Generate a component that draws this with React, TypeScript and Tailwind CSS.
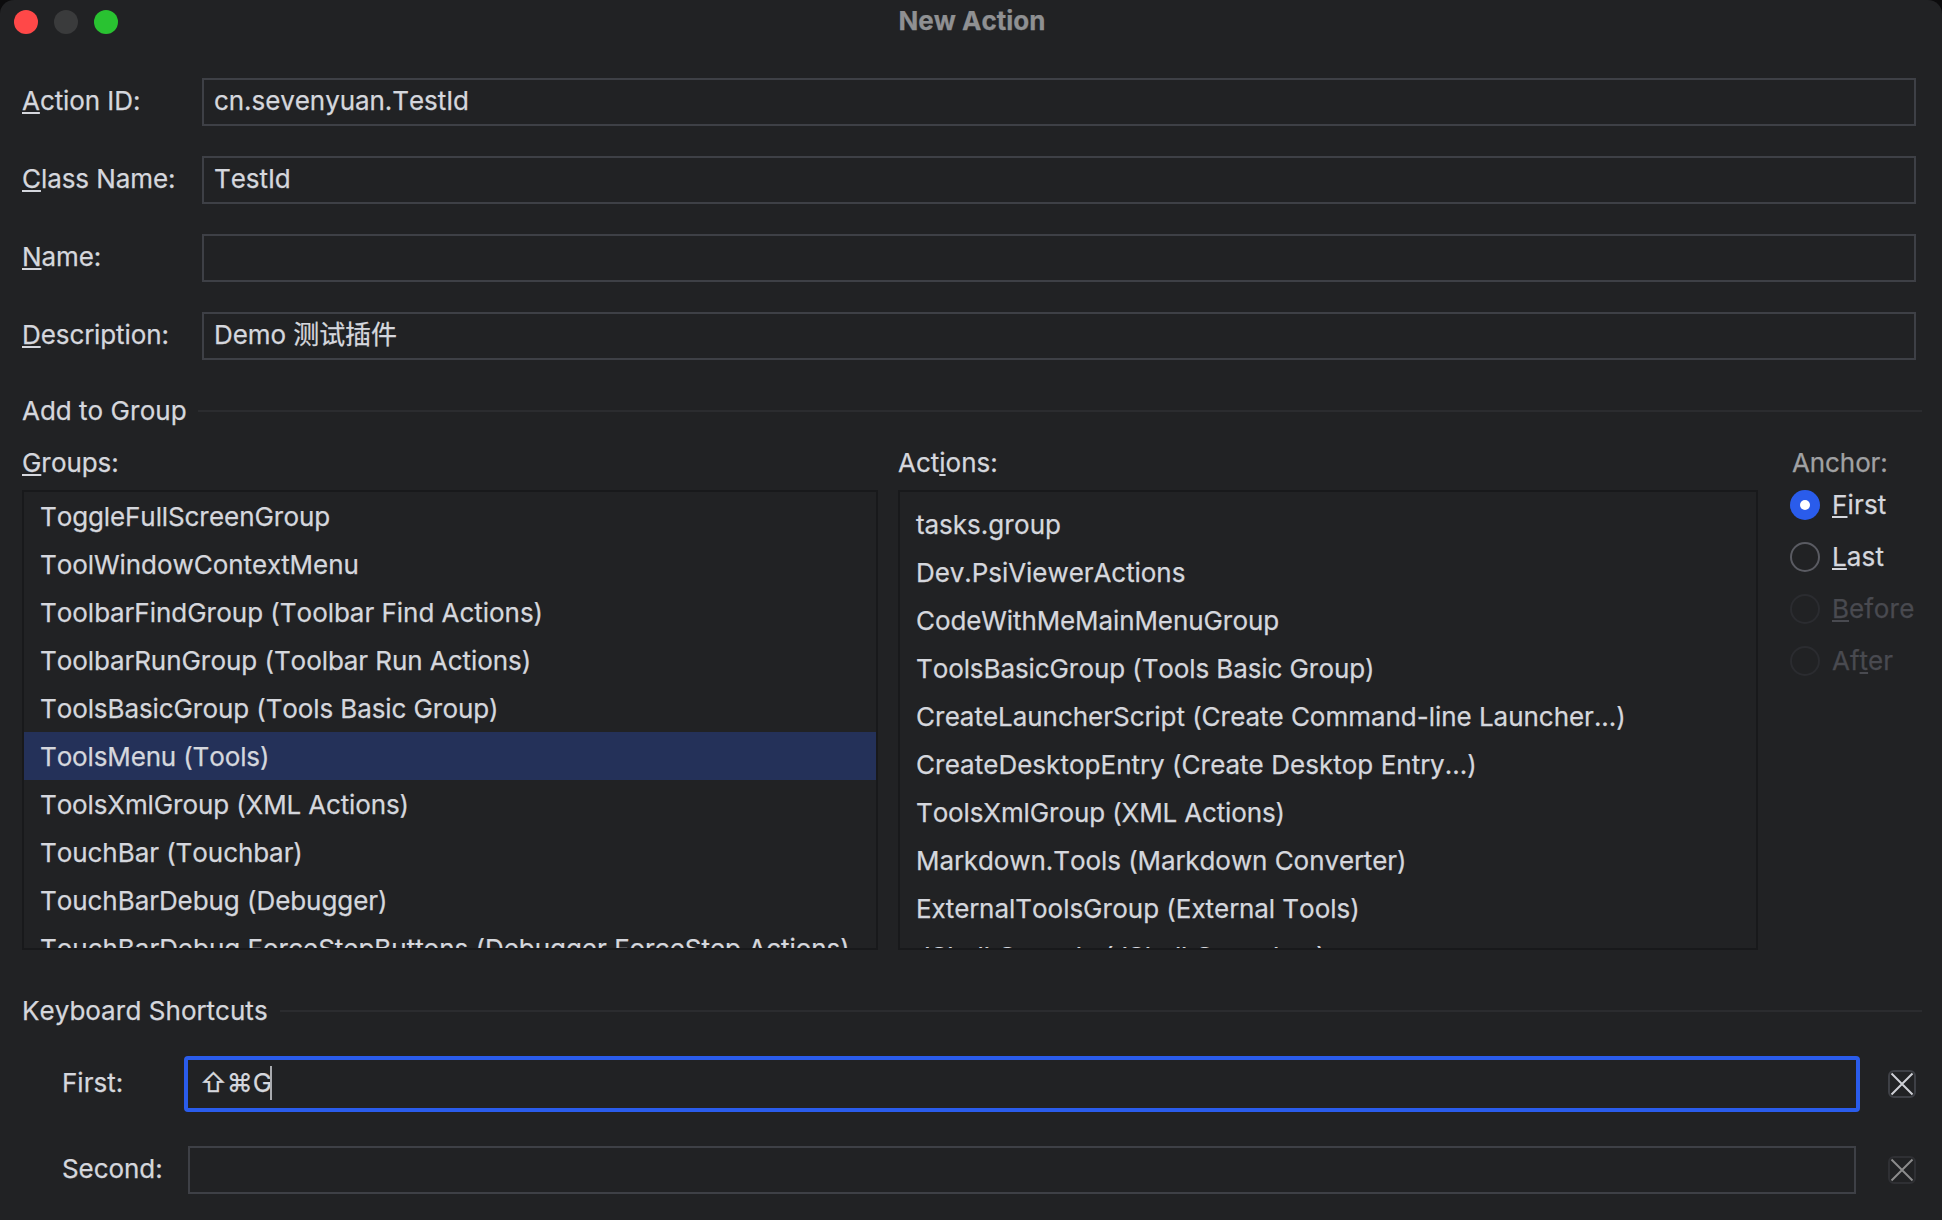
import React from "react";

type Mnemonic = { text: string; at?: number };

function Label({ text, at }: Mnemonic) {
  if (at === undefined) return <>{text}</>;
  return (
    <>
      {text.slice(0, at)}
      <span className="underline decoration-2 underline-offset-[2px] [text-decoration-skip-ink:none]">
        {text[at]}
      </span>
      {text.slice(at + 1)}
    </>
  );
}

const fields = [
  { label: "Action ID:", value: "cn.sevenyuan.TestId" },
  { label: "Class Name:", value: "TestId" },
  { label: "Name:", value: "" },
  { label: "Description:", value: "Demo 测试插件" },
];

type Item = { text: string; tracking: string };

const groups: Item[] = [
  { text: "ToggleFullScreenGroup", tracking: "tracking-[-0.1px]" },
  { text: "ToolWindowContextMenu", tracking: "tracking-[-0.06px]" },
  { text: "ToolbarFindGroup (Toolbar Find Actions)", tracking: "tracking-[-0.03px]" },
  { text: "ToolbarRunGroup (Toolbar Run Actions)", tracking: "tracking-[-0.06px]" },
  { text: "ToolsBasicGroup (Tools Basic Group)", tracking: "tracking-[-0.1px]" },
  { text: "ToolsMenu (Tools)", tracking: "tracking-[-0.14px]" },
  { text: "ToolsXmlGroup (XML Actions)", tracking: "tracking-[-0.14px]" },
  { text: "TouchBar (Touchbar)", tracking: "tracking-[-0.06px]" },
  { text: "TouchBarDebug (Debugger)", tracking: "tracking-[-0.06px]" },
  { text: "TouchBarDebug.ForceStepButtons (Debugger.ForceStep Actions)", tracking: "tracking-[-0.03px]" },
];

const actions: Item[] = [
  { text: "tasks.group", tracking: "tracking-normal" },
  { text: "Dev.PsiViewerActions", tracking: "tracking-[-0.06px]" },
  { text: "CodeWithMeMainMenuGroup", tracking: "tracking-[-0.1px]" },
  { text: "ToolsBasicGroup (Tools Basic Group)", tracking: "tracking-[-0.1px]" },
  { text: "CreateLauncherScript (Create Command-line Launcher...)", tracking: "tracking-[-0.03px]" },
  { text: "CreateDesktopEntry (Create Desktop Entry...)", tracking: "tracking-[0.03px]" },
  { text: "ToolsXmlGroup (XML Actions)", tracking: "tracking-[-0.14px]" },
  { text: "Markdown.Tools (Markdown Converter)", tracking: "tracking-[-0.06px]" },
  { text: "ExternalToolsGroup (External Tools)", tracking: "tracking-[-0.03px]" },
  { text: "JShell.Console (JShell Console...)", tracking: "tracking-[-0.14px]" },
];

const anchors = [
  { text: "First", at: 0, state: "selected" },
  { text: "Last", at: 0, state: "normal" },
  { text: "Before", at: 0, state: "disabled" },
  { text: "After", at: 2, state: "disabled" },
];

const radioStyle: Record<string, string> = {
  selected: "bg-[#2a5ceb]",
  normal: "border-2 border-[#5a5b62]",
  disabled: "border-2 border-[#2b2c30]",
};

function SectionTitle({ children, className }: { children: React.ReactNode; className: string }) {
  return (
    <div className="flex h-8 items-center">
      <span className={className}>{children}</span>
      <span className="h-0.5 flex-1 bg-[#2b2c2f]" />
    </div>
  );
}

function List({ items, selected, className }: { items: Item[]; selected?: number; className: string }) {
  return (
    <ul className={`h-[460px] overflow-hidden border-2 border-[#18191b] ${className}`}>
      {items.map((item, i) => (
        <li
          key={item.text}
          className={`h-12 whitespace-nowrap pl-4 leading-[49px] ${item.tracking} ${i === selected ? "bg-[#243159]" : ""}`}
        >
          {item.text}
        </li>
      ))}
    </ul>
  );
}

function ClearButton({ dim }: { dim?: boolean }) {
  return (
    <button
      className={`flex size-7 items-center justify-center rounded-md border-2 ${dim ? "border-[#2f3034]" : "border-[#3e4046]"}`}
    >
      <svg viewBox="0 0 24 24" className="size-6 shrink-0" fill="none" stroke={dim ? "#8c8c8c" : "#ced0d6"} strokeWidth="2">
        <path d="M1.5 1.5L22.5 22.5M22.5 1.5L1.5 22.5" />
      </svg>
    </button>
  );
}

export default function App() {
  return (
    <div className="h-[1220px] w-[1942px] overflow-hidden bg-[#0c0c0d]">
      <div className="flex h-full flex-col rounded-t-[14px] bg-[#212224] font-['Inter','Noto_Sans_CJK_SC',sans-serif] text-[26px] leading-8 text-[#d5d7dd] [-webkit-text-stroke:0.25px_currentColor] [font-kerning:none]">
        <header className="grid h-11 shrink-0 grid-cols-[1fr_auto_1fr] items-center pl-3.5">
          <div className="flex gap-4">
            <span className="size-6 rounded-full bg-[#ff4848]" />
            <span className="size-6 rounded-full bg-[#3a3b3c]" />
            <span className="size-6 rounded-full bg-[#29c231]" />
          </div>
          <h1 className="-ml-3 -mt-0.5 font-bold text-[#8f9092]">New Action</h1>
        </header>

        <form className="mt-[34px] flex flex-col gap-[30px] pl-[22px] pr-[26px]">
          {fields.map((f) => (
            <div key={f.label} className="flex h-12 tracking-[-0.07px]">
              <label className="w-[180px] leading-[46px]">
                <Label text={f.label} at={0} />
              </label>
              <div className="flex-1 border-2 border-[#3e4046] pl-[10px] leading-[42px]">{f.value}</div>
            </div>
          ))}
        </form>

        <section className="mt-[35px] pl-[22px] pr-5">
          <SectionTitle className="w-44">Add to Group</SectionTitle>
          <div className="mt-5 flex">
            <div className="w-[856px]">
              <div className="mb-[11px] tracking-[-0.1px]">
                <Label text="Groups:" at={0} />
              </div>
              <List items={groups} selected={5} className="" />
            </div>
            <div className="ml-5 w-[860px]">
              <div className="mb-[11px]">
                <Label text="Actions:" at={3} />
              </div>
              <List items={actions} className="pt-2" />
            </div>
            <div className="ml-8">
              <div className="pl-0.5 tracking-[-0.1px] text-[#a0a1a3]">Anchor:</div>
              <div className="mt-[11px] flex flex-col gap-[22px]">
                {anchors.map((a) => (
                  <div key={a.text} className="flex h-[30px] items-center gap-3">
                    <span className={`flex size-[30px] items-center justify-center rounded-full ${radioStyle[a.state]}`}>
                      {a.state === "selected" && <span className="size-2.5 rounded-full bg-white" />}
                    </span>
                    <span className={a.state === "disabled" ? "text-[#494a50]" : "tracking-[0.15px]"}>
                      <Label text={a.text} at={a.at} />
                    </span>
                  </div>
                ))}
              </div>
            </div>
          </div>
        </section>

        <section className="mt-[45px] pl-[22px] pr-5">
          <SectionTitle className="w-[258px] tracking-[0.05px]">Keyboard Shortcuts</SectionTitle>
          <div className="mt-[29px] flex h-14 items-center pl-10 pr-1.5">
            <span className="w-[122px] pb-0.5">First:</span>
            <div className="flex h-14 flex-1 items-center rounded-[4px] border-4 border-[#2a5ceb] pl-3">
              <span className="pb-0.5">⇧⌘G</span>
              <span className="-ml-0.5 mb-0.5 h-[34px] w-0.5 bg-[#a8aaae]" />
            </div>
            <span className="ml-7">
              <ClearButton />
            </span>
          </div>
          <div className="mt-[34px] flex h-12 items-center pl-10 pr-1.5">
            <span className="w-[126px] pb-0.5 tracking-[-0.07px]">Second:</span>
            <div className="h-12 flex-1 border-2 border-[#3e4046]" />
            <span className="ml-8">
              <ClearButton dim />
            </span>
          </div>
        </section>
      </div>
    </div>
  );
}
